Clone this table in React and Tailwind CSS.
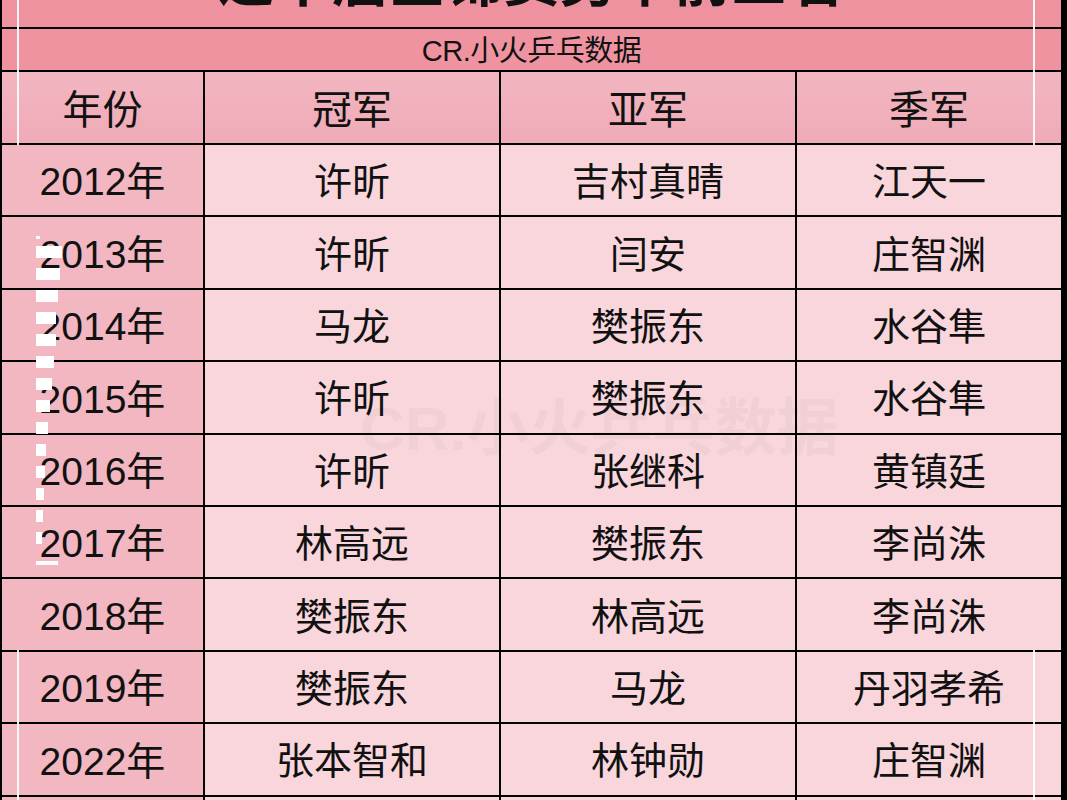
import React from "react";

const rows = [
  ["2012年", "许昕", "吉村真晴", "江天一"],
  ["2013年", "许昕", "闫安", "庄智渊"],
  ["2014年", "马龙", "樊振东", "水谷隼"],
  ["2015年", "许昕", "樊振东", "水谷隼"],
  ["2016年", "许昕", "张继科", "黄镇廷"],
  ["2017年", "林高远", "樊振东", "李尚洙"],
  ["2018年", "樊振东", "林高远", "李尚洙"],
  ["2019年", "樊振东", "马龙", "丹羽孝希"],
  ["2022年", "张本智和", "林钟勋", "庄智渊"],
  ["2023年", "王楚钦", "梁靖崑", "林昀儒"],
];

// dashed white scribble on the left edge of the photo
const dashes = [
  [236, 4, 3], [246, 26, 12], [268, 24, 12], [290, 22, 12], [312, 20, 12],
  [334, 20, 12], [356, 18, 12], [378, 16, 12], [400, 14, 12], [422, 12, 12],
  [444, 10, 12], [466, 9, 12], [488, 8, 12], [510, 7, 12], [532, 6, 12], [561, 22, 4],
];

export default function App() {
  return (
    <div
      className="relative w-[1067px] h-[800px] overflow-hidden bg-black text-[#111]"
      style={{ fontFamily: '"Liberation Sans", "Noto Sans CJK SC", sans-serif' }}
    >
      <div className="ml-[2px] w-[1059px] flex flex-col gap-[2px]">
        {/* title row, top cut off */}
        <div className="h-[27px] bg-[#ee929f] relative overflow-hidden flex justify-center">
          <span className="absolute top-[-50px] text-[56px] font-bold tracking-[1px] leading-[64px]">
            近十届全锦赛男单前三名
          </span>
        </div>
        {/* source row */}
        <div className="h-[41px] pt-[3px] bg-[#ef93a1] flex items-center justify-center text-[29px] leading-none tracking-[-0.5px]">
          CR.小火乒乓数据
        </div>
        {/* header */}
        <div className="grid grid-cols-[201px_294px_294px_264px] gap-x-[2px] h-[71px]">
          {["年份", "冠军", "亚军", "季军"].map((h, i) => (
            <div
              key={i}
              className="bg-gradient-to-b from-[#f2b6c0] to-[#efabb7] flex items-center justify-center pt-[4px] text-[40px]"
            >
              {h}
            </div>
          ))}
        </div>
        {rows.map((r, ri) => (
          <div key={ri} className="grid grid-cols-[201px_294px_294px_264px] gap-x-[2px] h-[70.4px]">
            {r.map((c, ci) => (
              <div
                key={ci}
                className={
                  ci === 0
                    ? "flex items-center justify-center pt-[5px] text-[39px] bg-[#f2b7c1]"
                    : "flex items-center justify-center pt-[5px] text-[38px] bg-[#f8d6dc]"
                }
              >
                {c}
              </div>
            ))}
          </div>
        ))}
      </div>

      {/* faint watermark */}
      <div className="absolute left-[360px] top-[398px] text-[62px] font-bold text-black/[0.03] leading-none pointer-events-none">
        CR.小火乒乓数据
      </div>

      {/* white glare lines */}
      <div className="absolute left-[17px] top-0 w-[2px] h-[145px] bg-white/90" />
      <div className="absolute left-[17px] top-[650px] w-[2px] h-[150px] bg-white/90" />
      <div className="absolute left-[1033px] top-0 w-[2px] h-[145px] bg-white/90" />
      <div className="absolute left-[1033px] top-[650px] w-[2px] h-[150px] bg-white/90" />
      {dashes.map(([y, w, h], i) => (
        <div
          key={i}
          className="absolute left-[36px] bg-white"
          style={{ top: y, width: w, height: h }}
        />
      ))}
    </div>
  );
}
